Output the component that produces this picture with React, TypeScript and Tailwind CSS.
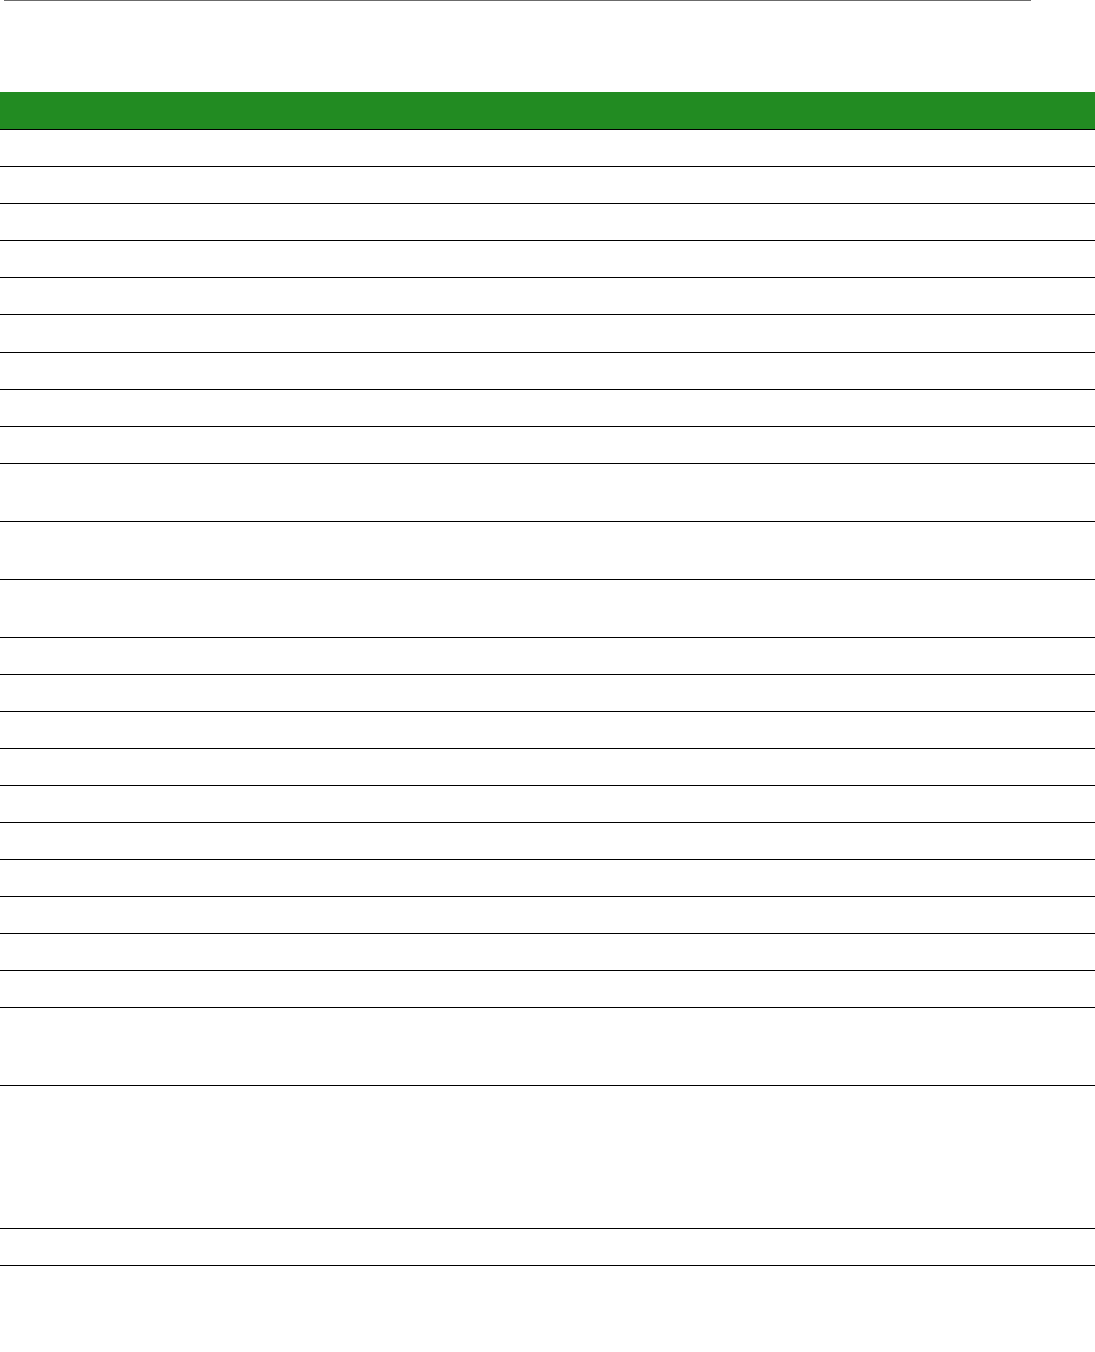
import React from 'react';

// row heights (px) including the 1px bottom rule
const rows: string[] = [
  ...Array(9).fill('h-[37.1px]'),
  ...Array(3).fill('h-[58px]'),
  ...Array(10).fill('h-[37px]'),
  'h-[78px]',
  'h-[143px]',
  'h-[37px]',
];

export default function App() {
  return (
    <div className="min-h-[1352px] w-[1095px] bg-white font-['Liberation_Sans',Arial,sans-serif]">
      {/* top rule */}
      <div className="ml-[4px] h-px w-[1027px] bg-[#6b6b6b]" />

      {/* table */}
      <div className="mt-[91px] w-full">
        <div className="h-[38px] border-b border-black bg-[#228b22]" />
        {rows.map((h, i) => (
          <div key={i} className={`${h} border-b border-black`} />
        ))}
      </div>
    </div>
  );
}
